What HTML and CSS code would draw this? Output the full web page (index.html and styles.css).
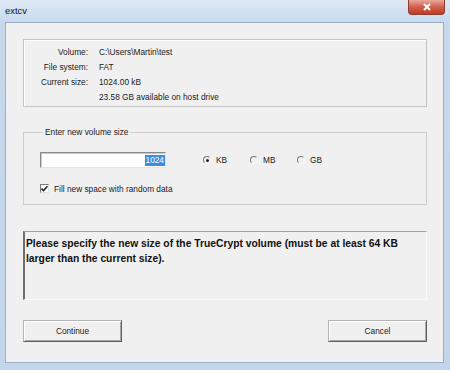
FILE: index.html
```html
<!DOCTYPE html>
<html lang="en">

    <head>
        <meta charset="UTF-8">
        <title>extcv</title>
        <link rel="stylesheet" href="styles.css">
    </head>

    <body>
        <div class="window">
            <div class="titlebar">
                <span class="title">extcv</span>
                <span class="close-btn">
                    <svg width="10" height="8" viewBox="0 0 10 8">
                        <path d="M2 1 L8 7 M8 1 L2 7" stroke="#fff" stroke-width="2" />
                    </svg>
                </span>
            </div>
            <div class="client">
                <div class="volume-info">
                    <span class="label">Volume:</span>
                    <span>C:\Users\Martin\test</span>
                    <span class="label">File system:</span>
                    <span>FAT</span>
                    <span class="label">Current size:</span>
                    <span>1024.00 kB</span>
                    <span class="label"></span>
                    <span>23.58 GB available on host drive</span>
                </div>

                <fieldset class="size-group">
                    <legend>Enter new volume size</legend>
                    <div class="size-row">
                        <div class="edit"><span class="selected">1024</span></div>
                        <div class="units">
                            <span class="unit"><span class="radio checked"></span>KB</span>
                            <span class="unit"><span class="radio"></span>MB</span>
                            <span class="unit"><span class="radio"></span>GB</span>
                        </div>
                    </div>
                    <div class="check-row">
                        <span class="checkbox">
                            <svg width="7" height="7" viewBox="0 0 7 7">
                                <path d="M0.5 3.5 L2.5 5.5 L6.5 1.2" stroke="#222" stroke-width="1.6" fill="none" />
                            </svg>
                        </span>
                        Fill new space with random data
                    </div>
                </fieldset>

                <div class="message">
                    Please specify the new size of the TrueCrypt volume (must be at least 64 KB larger than the current size).
                </div>

                <div class="buttons">
                    <button class="btn">Continue</button>
                    <button class="btn">Cancel</button>
                </div>
            </div>
        </div>
    </body>

</html>
```

FILE: styles.css
```css
body {
    margin: 0;
    font-family: "Liberation Sans", Arial, sans-serif;
    font-size: 8.3px;
    color: #1a1a1a;
}

.window {
    width: 450px;
    height: 370px;
    box-sizing: border-box;
    padding: 0 6px 7px 5px;
    display: flex;
    flex-direction: column;
    background: linear-gradient(#dfe9f5, #c8d9ee 22px, #c3d5eb);
}

.titlebar {
    height: 22px;
    display: flex;
    justify-content: space-between;
    align-items: flex-start;
}

.title {
    font-size: 9.4px;
    line-height: 22px;
    color: #111;
}

.close-btn {
    width: 35px;
    height: 14px;
    margin-right: -1px;
    border: 1px solid #8e3b30;
    border-top: none;
    border-radius: 0 0 4px 4px;
    background: linear-gradient(#e9a89b, #d0604c 50%, #c03a26);
    display: flex;
    align-items: center;
    justify-content: center;
}

.client {
    flex: 1;
    background-color: #f0f0f0;
    border: 1px solid #9aaec8;
    padding: 16px 16px 0 17px;
}

.volume-info {
    height: 60px;
    padding: 4px 0 2px 0;
    border: 1px solid #c4c4c4;
    box-shadow: inset 1px 1px #fff;
    display: grid;
    grid-template-columns: 64px auto;
    column-gap: 11px;
    grid-auto-rows: 15px;
    align-items: center;
}

.label {
    text-align: right;
}

.size-group {
    margin: 20px 0 0 0;
    padding: 0 0 11px 16px;
    min-width: 0;
    border: 1px solid #cdcdcd;
}

.size-group legend {
    margin-left: 3px;
    padding: 0 2px;
    line-height: 10px;
}

.size-row {
    margin-top: 15px;
    display: flex;
    align-items: center;
}

.edit {
    width: 124px;
    height: 14px;
    background-color: #fff;
    border: 1px solid;
    border-color: #8a8a8a #e6e6e6 #e6e6e6 #8a8a8a;
    box-shadow: inset 1px 1px #c8c8c8;
    display: flex;
    justify-content: flex-end;
    align-items: center;
}

.selected {
    background-color: #3d8ee0;
    color: #fff;
    padding: 0 1px;
    line-height: 11px;
}

.units {
    display: flex;
    margin-left: 37px;
}

.unit {
    width: 47px;
    display: flex;
    align-items: center;
    gap: 5px;
}

.radio {
    width: 6px;
    height: 6px;
    border-radius: 50%;
    border: 1px solid;
    border-color: #7a7a7a #f8f8f8 #f8f8f8 #7a7a7a;
    display: flex;
    align-items: center;
    justify-content: center;
}

.radio.checked::after {
    content: "";
    width: 3px;
    height: 3px;
    border-radius: 50%;
    background-color: #222;
}

.check-row {
    margin-top: 16px;
    height: 9px;
    display: flex;
    align-items: center;
    gap: 5px;
}

.checkbox {
    width: 7px;
    height: 7px;
    background-color: #fff;
    border: 1px solid;
    border-color: #7a7a7a #e0e0e0 #e0e0e0 #7a7a7a;
    display: flex;
}

.message {
    margin-top: 26px;
    height: 63px;
    padding: 4px 8px 0 1px;
    border-top: 1px solid #a3a3a3;
    border-left: 2px solid #6f6f6f;
    border-right: 1px solid #fbfbfb;
    border-bottom: 1px solid #fbfbfb;
    font-size: 10.3px;
    font-weight: bold;
    line-height: 15px;
    color: #111;
}

.buttons {
    margin-top: 20px;
    display: flex;
    justify-content: space-between;
}

.btn {
    width: 99px;
    height: 22px;
    padding: 0;
    font-family: inherit;
    font-size: 8.3px;
    color: #1a1a1a;
    background-color: #f0f0f0;
    border: 1px solid;
    border-color: #b4b4b4 #5e5e5e #5e5e5e #b4b4b4;
    box-shadow: inset 1px 1px #fff, inset -1px -1px #a9a9a9;
}
```
